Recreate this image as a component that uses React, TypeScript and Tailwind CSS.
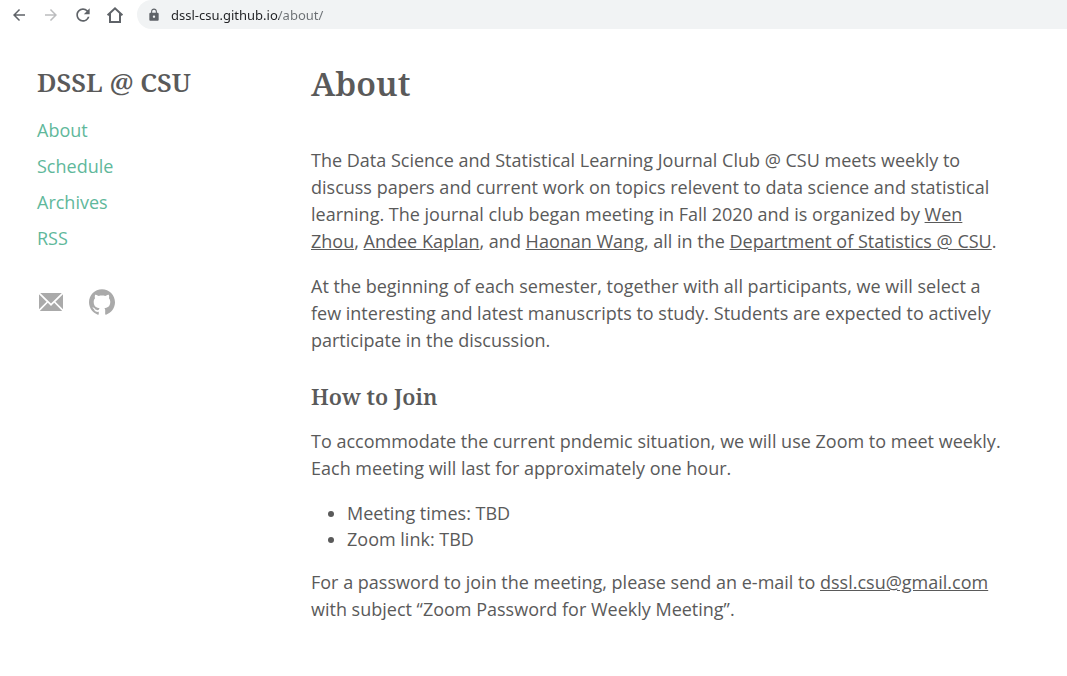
import React from "react";
import { MdArrowBack, MdArrowForward, MdLock, MdRefresh } from "react-icons/md";
import { SiGithub } from "react-icons/si";

const navLinks = [
  { label: "About", href: "#about" },
  { label: "Schedule", href: "#schedule" },
  { label: "Archives", href: "#archives" },
  { label: "RSS", href: "#rss" },
];

function HomeIcon() {
  return (
    <svg viewBox="0 0 18 18" className="size-[18px]" fill="none" stroke="currentColor" strokeWidth="2" aria-hidden="true">
      <path d="M1.6 9.3 9 2.3l7.4 7M4 7.6V16h10V7.6" />
    </svg>
  );
}

function MailIcon() {
  return (
    <svg viewBox="0 0 24 18" className="h-[18px] w-6" fill="currentColor" aria-hidden="true">
      <path d="M1.2 0h21.6L12 10.6zM0 1.2 7.6 8.7 0 16.3zM24 1.2v15.1l-7.6-7.6zM8.8 9.8 12 12.9l3.2-3.1 8 8.2H.8z" />
    </svg>
  );
}

function BrowserBar() {
  return (
    <div className="flex h-[29px] items-start bg-white text-[#5f6368]">
      <div className="flex h-[30px] shrink-0 items-center gap-3.5 pl-[10px]">
        <button type="button" aria-label="Back" className="w-[18px]">
          <MdArrowBack className="size-[18px]" />
        </button>
        <button type="button" aria-label="Forward" className="w-[18px] text-[#bcbdbf]">
          <MdArrowForward className="size-[18px]" />
        </button>
        <button type="button" aria-label="Reload" className="flex w-[18px] justify-center">
          <MdRefresh className="size-5 shrink-0" />
        </button>
        <button type="button" aria-label="Home" className="w-[18px]">
          <HomeIcon />
        </button>
      </div>
      <label className="ml-[13px] flex h-[29px] grow items-center gap-2.5 rounded-l-full bg-[#f1f3f4] pl-2.5">
        <MdLock className="size-3.5" />
        <input
          aria-label="Address"
          type="text"
          defaultValue="dssl-csu.github.io/about/"
          className="min-w-0 grow bg-[linear-gradient(90deg,#202124_108px,#6b6f73_108px)] bg-clip-text pt-0.5 font-['Noto_Sans',sans-serif] text-[13px] text-transparent outline-none"
        />
      </label>
    </div>
  );
}

function TextLink({ href, children }: { href: string; children: React.ReactNode }) {
  return (
    <a href={href} className="underline">
      {children}
    </a>
  );
}

export default function App() {
  return (
    <div className="bg-white font-['Open_Sans',sans-serif] text-lg leading-[27px] text-[#5a5a5a]">
      <BrowserBar />
      <div className="flex">
        <aside className="w-[311px] shrink-0 pt-[35px] pl-[37px]">
          <p className="font-['Noto_Serif','DejaVu_Serif',serif] text-[26px] leading-9 font-semibold">DSSL @ CSU</p>
          <nav className="mt-3">
            <ul>
              {navLinks.map((link) => (
                <li key={link.label} className="leading-9">
                  <a href={link.href} className="text-[#5fb89b]">
                    {link.label}
                  </a>
                </li>
              ))}
            </ul>
          </nav>
          <div className="mt-[33px] flex items-center gap-[26px] pl-0.5 text-[#aaaaaa]">
            <a href="mailto:dssl.csu@gmail.com" aria-label="E-mail">
              <MailIcon />
            </a>
            <a href="#github" aria-label="GitHub">
              <SiGithub className="size-[26px]" />
            </a>
          </div>
        </aside>
        <main className="max-w-[695px] min-w-0 grow pt-8 pb-[53px]">
          <h1 className="mb-[41px] font-['Noto_Serif','DejaVu_Serif',serif] text-[33px] leading-[45px] font-semibold">About</h1>
          <p className="mb-[18px]">
            The Data Science and Statistical Learning Journal Club @ CSU meets weekly to discuss papers and current work
            on topics relevent to data science and statistical learning. The journal club began meeting in Fall 2020 and
            is organized by <TextLink href="#wen-zhou">Wen Zhou</TextLink>,{" "}
            <TextLink href="#andee-kaplan">Andee Kaplan</TextLink>, and{" "}
            <TextLink href="#haonan-wang">Haonan Wang</TextLink>, all in the{" "}
            <TextLink href="#statistics">Department of Statistics @ CSU</TextLink>.
          </p>
          <p className="mb-7">
            At the beginning of each semester, together with all participants, we will select a few interesting and
            latest manuscripts to study. Students are expected to actively participate in the discussion.
          </p>
          <h2 className="mb-[18px] font-['Noto_Serif','DejaVu_Serif',serif] text-[22px] leading-7 font-semibold">How to Join</h2>
          <p className="mb-[18px]">
            To accommodate the current pndemic situation, we will use Zoom to meet weekly. Each meeting will last for
            approximately one hour.
          </p>
          <ul className="mb-[17px] list-disc pl-9 leading-[26px]">
            <li>Meeting times: TBD</li>
            <li>Zoom link: TBD</li>
          </ul>
          <p>
            For a password to join the meeting, please send an e-mail to{" "}
            <TextLink href="mailto:dssl.csu@gmail.com">dssl.csu@gmail.com</TextLink> with subject “Zoom Password for
            Weekly Meeting”.
          </p>
        </main>
      </div>
    </div>
  );
}
